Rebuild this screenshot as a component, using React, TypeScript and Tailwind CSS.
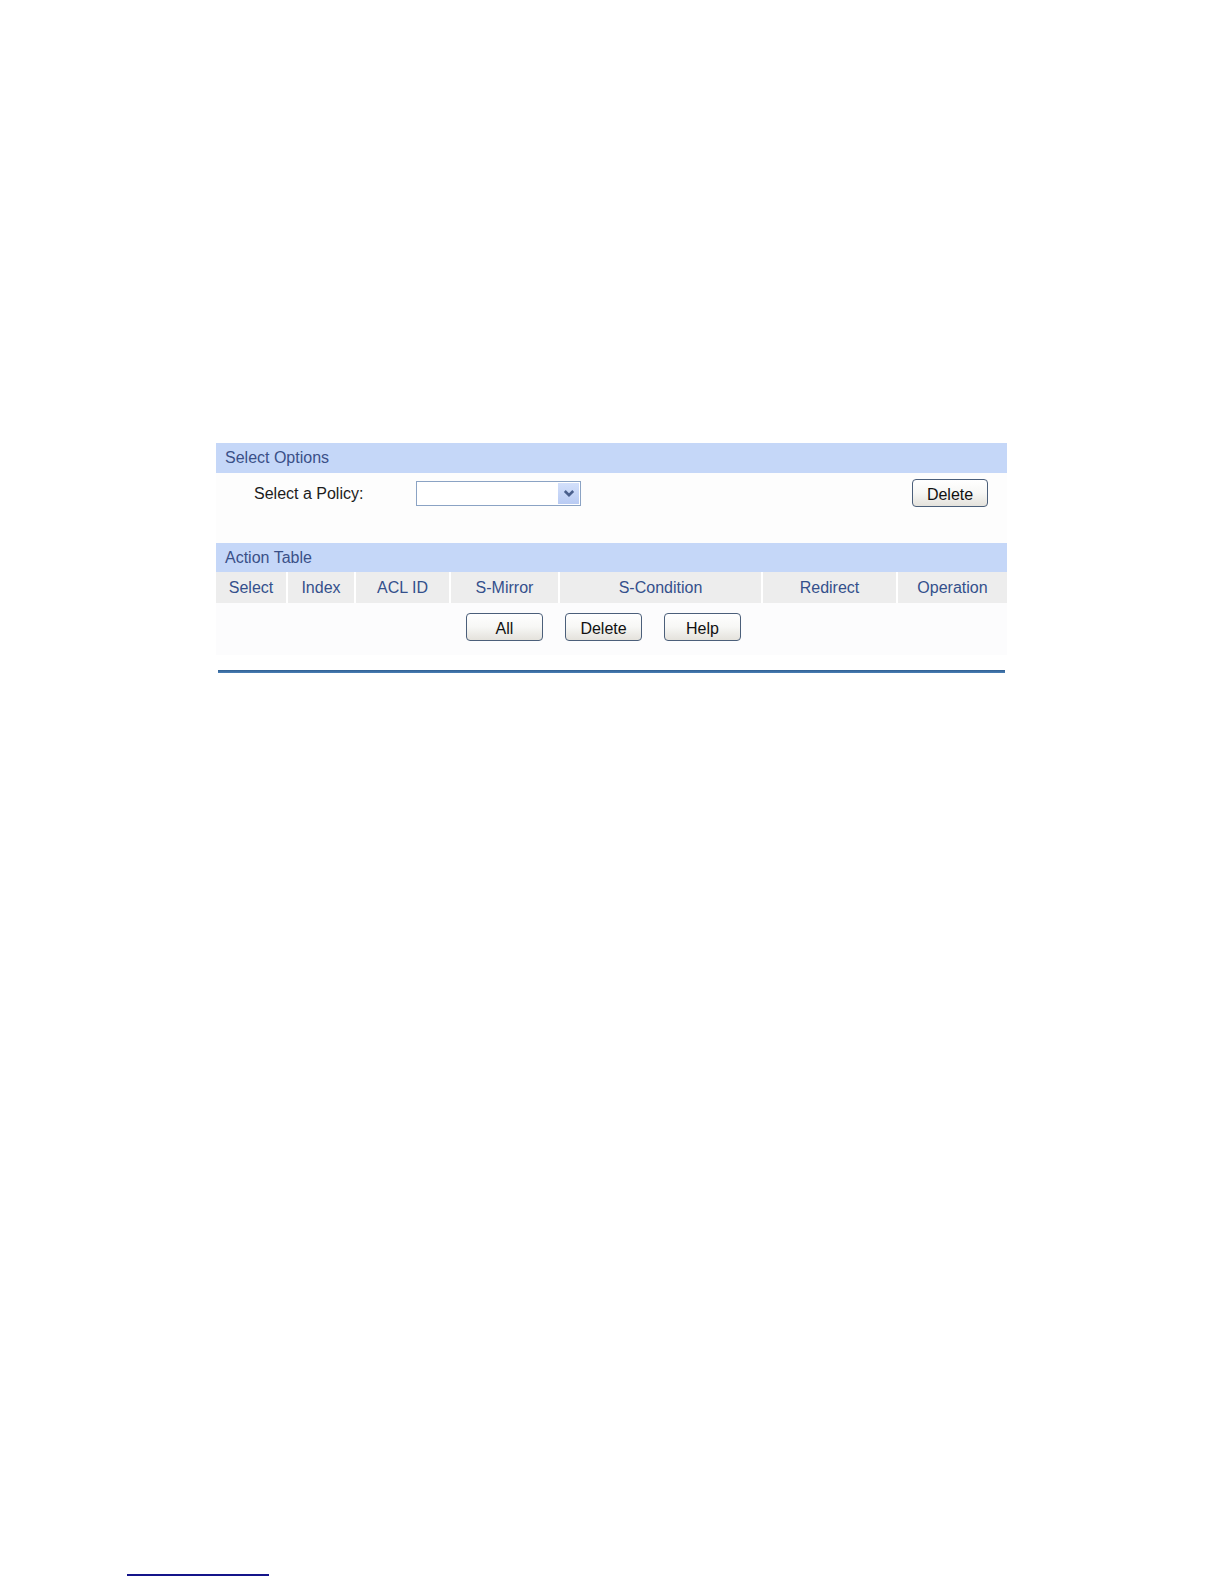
import React from "react";

const cols = [
  { label: "Select", w: "w-[70px]" },
  { label: "Index", w: "w-[68px]" },
  { label: "ACL ID", w: "w-[95px]" },
  { label: "S-Mirror", w: "w-[109px]" },
  { label: "S-Condition", w: "w-[203px]" },
  { label: "Redirect", w: "w-[135px]" },
  { label: "Operation", w: "flex-1" },
];

const Button = ({ children, w = "w-[77px]" }: { children: React.ReactNode; w?: string }) => (
  <button
    className={`${w} h-[28px] rounded-[4px] border border-[#4b5f7a] bg-gradient-to-b from-white via-[#f7f7f5] to-[#e4e2dc] text-[16px] leading-none text-[#111] pt-[4px]`}
  >
    {children}
  </button>
);

const Band = ({ title, h }: { title: string; h: string }) => (
  <div className={`${h} bg-[#c5d7f8] text-[#3a5088] text-[16px] pl-[9px] flex items-center`}>
    {title}
  </div>
);

const App = () => {
  return (
    <div
      className="h-[1584px] flex flex-col bg-white"
      style={{ fontFamily: '"Liberation Sans", Arial, sans-serif' }}
    >
      <div className="pt-[443px] pl-[216px]">
        <div className="w-[791px]">
          {/* Select Options */}
          <Band title="Select Options" h="h-[30px]" />
          <div className="h-[70px] bg-[#fdfdfd] pt-[6px]">
            <div className="h-[28px] flex items-center">
              <div className="w-[200px] pl-[38px] pt-[2px] text-[16px] text-[#1c1c1c]">Select a Policy:</div>
              <div className="w-[165px] h-[25px] border border-[#8ba3c4] bg-white flex justify-end items-center pr-[1px]">
                <div className="w-[21px] h-[21px] bg-gradient-to-b from-[#d3e0fb] to-[#b9cbf3] flex items-center justify-center">
                  <svg width="12" height="9" viewBox="0 0 12 9">
                    <polyline points="1.8,2 6,6.2 10.2,2" fill="none" stroke="#4a5f8c" strokeWidth="2.6" />
                  </svg>
                </div>
              </div>
              <div className="ml-auto mr-[19px]">
                <Button w="w-[76px]">Delete</Button>
              </div>
            </div>
          </div>

          {/* Action Table */}
          <Band title="Action Table" h="h-[29px]" />
          <div className="h-[31px] bg-[#ededed] flex">
            {cols.map((c, i) => (
              <div
                key={c.label}
                className={`${c.w} flex items-center justify-center text-[16px] text-[#34508c] ${i > 0 ? "border-l-2 border-white" : ""}`}
              >
                {c.label}
              </div>
            ))}
          </div>
          <div className="bg-[#fcfcfd] pt-[10px] pb-[14px] pl-[250px] flex gap-[22px]">
            <Button>All</Button>
            <Button>Delete</Button>
            <Button>Help</Button>
          </div>
          <div className="mt-[15px] ml-[2px] w-[787px] h-[3px] bg-gradient-to-b from-[#2f5f93] to-[#4a7fb5]" />
        </div>
      </div>

      <div className="mt-auto mb-[8px] ml-[127px] w-[142px] h-[2px] bg-[#14148a]" />
    </div>
  );
};

export default App;
